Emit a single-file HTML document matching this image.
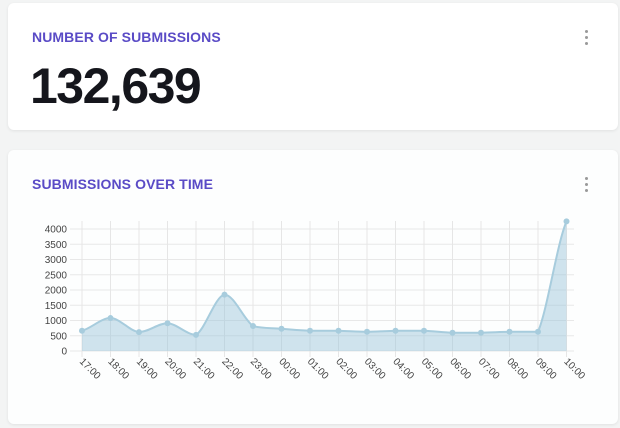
<!DOCTYPE html>
<html><head><meta charset="utf-8"><style>
html,body{margin:0;padding:0;width:620px;height:428px;overflow:hidden;background:#f3f4f4;font-family:"Liberation Sans",Arial,sans-serif}
.card{position:absolute;left:8px;width:610px;background:#fff;border-radius:6px;box-shadow:0 1px 3px rgba(0,0,0,.08)}
.t{position:absolute;left:24px;font-size:14px;font-weight:bold;color:#5a4bc6;letter-spacing:0.1px}
.dots{position:absolute;left:577px;width:3px}
.dots i{display:block;width:3px;height:3px;border-radius:50%;background:#999;margin-bottom:3px}
.num{position:absolute;left:22px;top:54px;font-size:50px;font-weight:bold;color:#15161c;letter-spacing:-1.5px}
</style></head><body>
<div class="card" style="top:3px;height:127px">
<div class="t" style="top:26px">NUMBER OF SUBMISSIONS</div>
<div class="dots" style="top:27px"><i></i><i></i><i></i></div>
<div class="num">132,639</div>
</div>
<div class="card" style="top:150px;height:274px;background:#fdfefe">
<div class="t" style="top:26px">SUBMISSIONS OVER TIME</div>
<div class="dots" style="top:27px"><i></i><i></i><i></i></div>
</div>
<svg id="c" width="620" height="428" style="position:absolute;left:0;top:0" font-family="Liberation Sans, Arial, sans-serif"></svg>
<script>
var v=[665,1080,620,910,530,1850,820,730,665,665,630,665,665,600,600,630,630,4250];
var labels=["17:00","18:00","19:00","20:00","21:00","22:00","23:00","00:00","01:00","02:00","03:00","04:00","05:00","06:00","07:00","08:00","09:00","10:00"];
var x0=82,dx=28.5,y0=351,k=0.0305,s='';
function X(i){return x0+i*dx}function Y(a){return y0-a*k}
function cl(y,a,b){var lo=Math.min(a,b),hi=Math.max(a,b);return Math.max(lo,Math.min(hi,y));}
for(var g=0;g<=4000;g+=500){var y=Y(g);s+='<line x1="70" x2="574" y1="'+y+'" y2="'+y+'" stroke="#e8e8e8"/>';s+='<text x="67" y="'+(y+3.5)+'" font-size="10" fill="#444" text-anchor="end">'+g+'</text>';}
for(var i=0;i<18;i++){s+='<line x1="'+X(i)+'" x2="'+X(i)+'" y1="221" y2="357" stroke="#e6e6e6"/>';
s+='<text transform="translate('+(X(i)-3)+',362) rotate(45)" font-size="10" fill="#444">'+labels[i]+'</text>';}
var p='M'+X(0)+','+Y(v[0]);
for(var i=0;i<17;i++){var a=v[Math.max(i-1,0)],b=v[i],c=v[i+1],d=v[Math.min(i+2,17)];
var t=0.4;var c1y=Y(b)+(Y(c)-Y(a))*t/2,c2y=Y(c)-(Y(d)-Y(b))*t/2;
c1y=cl(c1y,Y(b),Y(c));c2y=cl(c2y,Y(b),Y(c));
p+=' C'+(X(i)+dx/3)+','+c1y+' '+(X(i+1)-dx/3)+','+c2y+' '+X(i+1)+','+Y(c);}
s+='<path d="'+p+' L'+X(17)+','+y0+' L'+X(0)+','+y0+'Z" fill="rgba(151,196,218,0.45)"/>';
s+='<path d="'+p+'" fill="none" stroke="#a7ccdd" stroke-width="2"/>';
for(var i=0;i<18;i++)s+='<circle cx="'+X(i)+'" cy="'+Y(v[i])+'" r="3" fill="#a7ccdd"/>';
document.getElementById('c').innerHTML=s;
</script>
</body></html>
